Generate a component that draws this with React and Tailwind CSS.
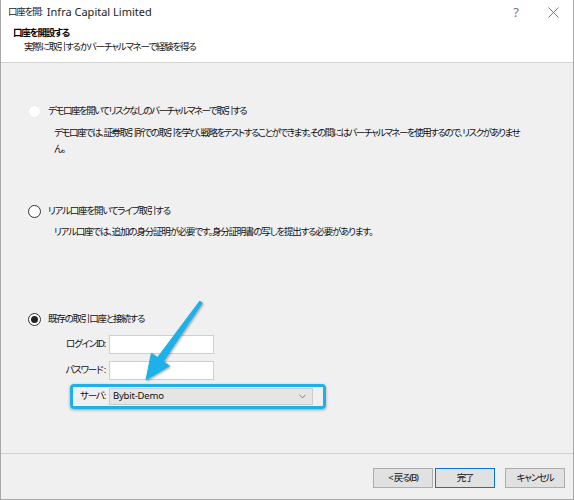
import { ChevronDown } from "lucide-react";

const font = "font-['Noto_Sans','Noto_Sans_CJK_JP',sans-serif]";
const jp = "[font-feature-settings:'palt'] text-[9.5px] tracking-[-1.2px]";
const jpTight = "[font-feature-settings:'palt'] text-[9.5px] tracking-[-1.5px]";

function Radio({ state }) {
  if (state === "disabled") {
    return <span className="block w-[13px] h-[13px] rounded-full bg-white border border-[#ebebeb]" />;
  }
  return (
    <span className="flex items-center justify-center w-[13px] h-[13px] rounded-full bg-white border border-[#333]">
      {state === "checked" && <span className="block w-[7px] h-[7px] rounded-full bg-[#222]" />}
    </span>
  );
}

function Option({ state, label, tight, children }) {
  return (
    <div>
      <div className="flex items-center h-[16px]">
        <div className="w-[47px] flex justify-end pr-[7px]">
          <Radio state={state} />
        </div>
        <span className={`${tight ? jpTight : jp} text-[#111]`}>{label}</span>
      </div>
      {children}
    </div>
  );
}

function Field({ label }) {
  return (
    <div className="flex items-center h-[19px]">
      <div className="w-[38px] flex justify-end">
        <span className={`${jp} shrink-0 whitespace-nowrap`}>{label}</span>
      </div>
      <div className="ml-[4px] w-[105px] h-[19px] bg-white border border-[#cfcfcf]" />
    </div>
  );
}

function Button({ children, primary }) {
  return (
    <button
      className={
        "w-[60px] h-[20px] bg-[#e1e1e1] border text-[#111] " +
        jp +
        (primary ? " border-[#0078d7]" : " border-[#adadad]")
      }
    >
      {children}
    </button>
  );
}

export default function App() {
  return (
    <div className={`relative w-[574px] h-[500px] flex flex-col text-[#111] border-l border-r border-b border-[#a8a8a8] ${font}`}>
      {/* title + header */}
      <div className="bg-white h-[62px] shrink-0">
        <div className="flex items-center h-[25px] pl-[7px]">
          <span className={`${jp} text-[#222]`}>口座を開:</span>
          <span className="ml-[5px] text-[11px] text-[#222]">Infra Capital Limited</span>
          <span className="ml-auto mr-[29px] text-[13px] text-[#777]">?</span>
          <svg className="mr-[14px]" width="11" height="11" viewBox="0 0 11 11">
            <path d="M0.5 0.5 L10.5 10.5 M10.5 0.5 L0.5 10.5" stroke="#777" strokeWidth="1" />
          </svg>
        </div>
        <div className={`pl-[12px] pt-[2px] h-[14px] leading-[12px] font-bold text-[#000] ${jp}`}>口座を開設する</div>
        <div className={`pl-[23px] pt-[2px] leading-[12px] text-[#111] ${jp}`}>実際に取引するかバーチャルマネーで経験を得る</div>
      </div>
      <div className="h-px bg-[#d4d4d4] shrink-0" />

      {/* body */}
      <div className="flex-1 bg-[#f0f0f0] pt-[40px]">
        <Option state="disabled" tight label="デモ口座を開いてリスクなしのバーチャルマネーで取引する">
          <div className={`pl-[53px] mt-[6px] leading-[16px] text-[#111] ${jpTight}`}>
            <div className="whitespace-nowrap">デモ口座では、証券取引所での取引を学び、戦略をテストすることができます。その間にはバーチャルマネーを使用するので、リスクがありませ</div>
            <div>ん。</div>
          </div>
        </Option>

        <div className="h-[46px]" />
        <Option state="empty" label="リアル口座を開いてライブ取引する">
          <div className={`pl-[53px] mt-[5px] leading-[16px] text-[#111] whitespace-nowrap ${jp}`}>
            リアル口座では、追加の身分証明が必要です。身分証明書の写しを提出する必要があります。
          </div>
        </Option>

        <div className="h-[71px]" />
        <Option state="checked" label="既存の取引口座と接続する">
          <div className="pl-[66px] mt-[8px] flex flex-col gap-[7px]">
            <Field label="ログインID:" />
            <Field label="パスワード :" />
          </div>
          <div className="ml-[69px] mt-[4px] w-[256px] h-[25px] flex items-center border-[3px] border-[#1eb1e8] rounded-[4px] shadow-[0_1px_3px_rgba(0,0,0,0.35)]">
            <div className="w-[32px] flex justify-end">
              <span className={`${jp} shrink-0 whitespace-nowrap`}>サーバ:</span>
            </div>
            <div className="ml-[4px] w-[204px] h-[17px] flex items-center bg-[#e5e5e5] border border-[#cdcdcd] pl-[3px]">
              <span className="text-[9.5px] tracking-[-0.2px] text-[#111]">Bybit-Demo</span>
              <ChevronDown className="ml-auto mr-[4px] text-[#555]" size={11} strokeWidth={1.5} />
            </div>
          </div>
        </Option>
      </div>

      {/* footer */}
      <div className="h-px bg-[#d0d0d0] shrink-0" />
      <div className="h-[45px] shrink-0 bg-[#f0f0f0] flex items-start pt-[14px] pr-[8px] justify-end">
        <Button>&lt; 戻る(B)</Button>
        <div className="w-[2px]" />
        <Button primary>完了</Button>
        <div className="w-[10px]" />
        <Button>キャンセル</Button>
      </div>

      {/* annotation arrow */}
      <svg className="absolute left-0 top-0 pointer-events-none" width="574" height="500">
        <defs>
          <filter id="sh" x="-20%" y="-20%" width="140%" height="140%">
            <feDropShadow dx="1" dy="1" stdDeviation="1.2" floodColor="#000" floodOpacity="0.35" />
          </filter>
        </defs>
        <polygon
          points="201.2,302.9 162.3,361.6 168.4,365.9 145,380 150.4,353.3 156.5,357.6 198.8,301.1"
          fill="#1eb1e8"
          stroke="#1eb1e8"
          strokeWidth="1"
          strokeLinejoin="round"
          filter="url(#sh)"
        />
      </svg>
    </div>
  );
}
